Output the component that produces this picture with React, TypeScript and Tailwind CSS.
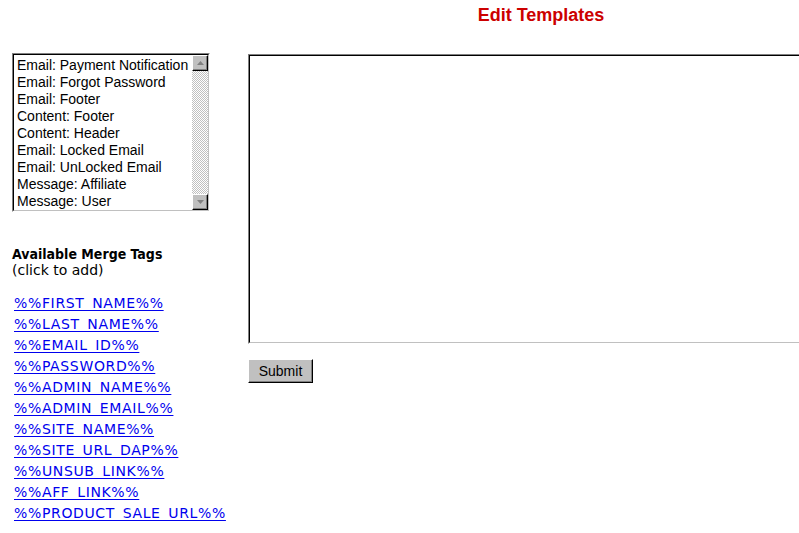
import React from "react";

// --- Data ---
const TEMPLATES = [
  "Email: Payment Notification",
  "Email: Forgot Password",
  "Email: Footer",
  "Content: Footer",
  "Content: Header",
  "Email: Locked Email",
  "Email: UnLocked Email",
  "Message: Affiliate",
  "Message: User",
];

const MERGE_TAGS = [
  "%%FIRST_NAME%%",
  "%%LAST_NAME%%",
  "%%EMAIL_ID%%",
  "%%PASSWORD%%",
  "%%ADMIN_NAME%%",
  "%%ADMIN_EMAIL%%",
  "%%SITE_NAME%%",
  "%%SITE_URL_DAP%%",
  "%%UNSUB_LINK%%",
  "%%AFF_LINK%%",
  "%%PRODUCT_SALE_URL%%",
];

// --- Sub-components ---

const ArrowButton = ({ dir }: { dir: "up" | "down" }) => (
  <div className="flex h-[16px] w-[16px] items-center justify-center border border-t-white border-l-white border-r-black border-b-black bg-[#c0c0c0] shadow-[inset_-1px_-1px_0_#808080]">
    <svg width="7" height="4" viewBox="0 0 7 4">
      {dir === "up" ? (
        <path d="M3.5 0L7 4H0z" fill="#808080" />
      ) : (
        <path d="M0 0h7L3.5 4z" fill="#808080" />
      )}
    </svg>
  </div>
);

const ListBox = () => (
  <div className="h-[159px] w-[198px] border border-t-[#808080] border-l-[#808080] border-r-white border-b-white">
    <div className="flex h-full border border-t-black border-l-black border-r-[#c0c0c0] border-b-[#c0c0c0] bg-white">
      <ul className="flex-1 pt-[2px] pl-[3px] font-['Liberation_Sans',Arial,sans-serif] text-[14px] leading-[17px] text-black">
        {TEMPLATES.map((t) => (
          <li key={t} className="whitespace-nowrap">
            {t}
          </li>
        ))}
      </ul>
      <div className="flex w-[16px] flex-col bg-[repeating-conic-gradient(#c0c0c0_0_25%,#ffffff_0_50%)] bg-[length:2px_2px]">
        <ArrowButton dir="up" />
        <div className="flex-1" />
        <ArrowButton dir="down" />
      </div>
    </div>
  </div>
);

export default function App() {
  return (
    <div className="h-[533px] w-[799px] overflow-hidden bg-white">
      <div className="w-[1082px]">
        <h1 className="pt-[5px] text-center font-['Liberation_Sans',Arial,sans-serif] text-[18px] font-bold leading-[21px] text-[#cc0000]">
          Edit Templates
        </h1>

        <div className="mt-[27px] flex">
          {/* left column */}
          <div className="w-[248px] pl-[12px]">
            <ListBox />

            <div className="mt-[34px] font-['DejaVu_Sans',Verdana,sans-serif] text-[14px] leading-[16px] text-black">
              <p className="font-['DejaVu_Sans_Condensed','DejaVu_Sans',sans-serif] font-bold">
                Available Merge Tags
              </p>
              <p>(click to add)</p>
            </div>

            <ul className="mt-[15px] pl-[2px] font-['DejaVu_Sans',Verdana,sans-serif] text-[14px] leading-[21px] tracking-[0.65px]">
              {MERGE_TAGS.map((tag) => (
                <li key={tag}>
                  <a
                    href="#"
                    className="text-[#0000ee] underline decoration-1 underline-offset-[2px]"
                  >
                    {tag}
                  </a>
                </li>
              ))}
            </ul>
          </div>

          {/* right column */}
          <div className="flex-1 pt-[1px]">
            <div className="h-[290px] w-[820px] border border-t-[#808080] border-l-[#808080] border-r-white border-b-white">
              <textarea className="block h-full w-full resize-none border border-t-black border-l-black border-r-[#c0c0c0] border-b-[#c0c0c0] bg-white outline-none" />
            </div>

            <button
              type="button"
              className="mt-[15px] h-[24px] w-[65px] border border-t-white border-l-white border-r-black border-b-black bg-[#c0c0c0] font-['Liberation_Sans',Arial,sans-serif] text-[14px] text-black shadow-[inset_-1px_-1px_0_#808080]"
            >
              Submit
            </button>
          </div>
        </div>
      </div>
    </div>
  );
}
